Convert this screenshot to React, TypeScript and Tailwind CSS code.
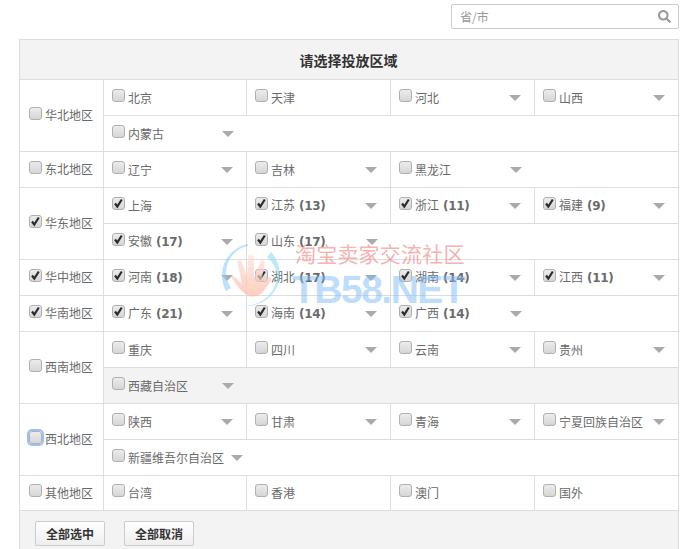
import { FaSearch } from "react-icons/fa";

interface Province {
  readonly name: string;
  readonly count?: number;
  readonly checked?: boolean;
  readonly arrow?: boolean;
}

interface Region {
  readonly name: string;
  readonly checked?: boolean;
  readonly focus?: boolean;
  readonly shaded?: boolean;
  readonly rows: readonly (readonly Province[])[];
}

const regions: Region[] = [
  {
    name: "华北地区",
    rows: [
      [
        { name: "北京" },
        { name: "天津" },
        { name: "河北", arrow: true },
        { name: "山西", arrow: true },
      ],
      [{ name: "内蒙古", arrow: true }],
    ],
  },
  {
    name: "东北地区",
    rows: [
      [
        { name: "辽宁", arrow: true },
        { name: "吉林", arrow: true },
        { name: "黑龙江", arrow: true },
      ],
    ],
  },
  {
    name: "华东地区",
    checked: true,
    rows: [
      [
        { name: "上海", checked: true },
        { name: "江苏", count: 13, checked: true, arrow: true },
        { name: "浙江", count: 11, checked: true, arrow: true },
        { name: "福建", count: 9, checked: true, arrow: true },
      ],
      [
        { name: "安徽", count: 17, checked: true, arrow: true },
        { name: "山东", count: 17, checked: true, arrow: true },
      ],
    ],
  },
  {
    name: "华中地区",
    checked: true,
    rows: [
      [
        { name: "河南", count: 18, checked: true, arrow: true },
        { name: "湖北", count: 17, checked: true, arrow: true },
        { name: "湖南", count: 14, checked: true, arrow: true },
        { name: "江西", count: 11, checked: true, arrow: true },
      ],
    ],
  },
  {
    name: "华南地区",
    checked: true,
    rows: [
      [
        { name: "广东", count: 21, checked: true, arrow: true },
        { name: "海南", count: 14, checked: true, arrow: true },
        { name: "广西", count: 14, checked: true, arrow: true },
      ],
    ],
  },
  {
    name: "西南地区",
    shaded: true,
    rows: [
      [
        { name: "重庆" },
        { name: "四川", arrow: true },
        { name: "云南", arrow: true },
        { name: "贵州", arrow: true },
      ],
      [{ name: "西藏自治区", arrow: true }],
    ],
  },
  {
    name: "西北地区",
    focus: true,
    rows: [
      [
        { name: "陕西", arrow: true },
        { name: "甘肃", arrow: true },
        { name: "青海", arrow: true },
        { name: "宁夏回族自治区", arrow: true },
      ],
      [{ name: "新疆维吾尔自治区", arrow: true }],
    ],
  },
  {
    name: "其他地区",
    rows: [
      [
        { name: "台湾" },
        { name: "香港" },
        { name: "澳门" },
        { name: "国外" },
      ],
    ],
  },
];

function Box({ checked, focus }: { checked?: boolean; focus?: boolean }) {
  return (
    <span
      className={`flex w-[13px] h-[13px] shrink-0 -mt-[5px] items-center justify-center rounded-[3px] border border-[#b0b0b0] bg-gradient-to-b from-[#ececec] to-[#d6d6d6] ${
        focus ? "outline-2 outline-[#9cc0f5]" : ""
      }`}
    >
      {checked && (
        <svg width="11" height="11" viewBox="0 0 11 11">
          <path d="M2 5.5 L4.3 8.5 L8.8 1.5" fill="none" stroke="#2c2c2c" strokeWidth="2.2" />
        </svg>
      )}
    </span>
  );
}

function Arrow() {
  return (
    <span className="ml-[7px] w-0 h-0 shrink-0 border-x-[6px] border-x-transparent border-t-[6px] border-t-[#aaaaaa]" />
  );
}

function ProvinceCell({
  province,
  divider,
  short,
}: {
  province: Province;
  divider: boolean;
  short: boolean;
}) {
  return (
    <div
      className={`flex items-center pl-[8px] pr-[13px] ${short ? "h-[34px]" : "h-[35px]"} ${
        divider ? "border-r border-[#dddddd]" : ""
      }`}
    >
      <Box checked={province.checked} />
      <span className="ml-[3px] flex-1 whitespace-nowrap">
        {province.name}
        {province.count !== undefined && (
          <b className="ml-[4px] text-[12px] font-['DejaVu_Sans',sans-serif] tracking-[-0.3px]">
            ({province.count})
          </b>
        )}
      </span>
      {province.arrow && <Arrow />}
    </div>
  );
}

export default function App() {
  return (
    <div className="w-[687px] h-[549px] relative overflow-hidden bg-white text-[12px] leading-[18px] text-[#6a6a6a] font-['Noto_Sans_CJK_SC','Liberation_Sans',sans-serif]">
      <div className="flex justify-end pt-[4px] pr-[8px] h-[39px]">
        <div className="flex items-center justify-between w-[228px] h-[25px] pl-[8px] pr-[7px] rounded-[2px] border border-[#cccccc] text-[#999999]">
          <span>省/市</span>
          <FaSearch size={13} className="text-[#999999]" />
        </div>
      </div>

      <div className="w-[660px] ml-[19px] border-x border-t border-[#dddddd]">
        <div className="flex items-center justify-center pr-[1px] h-[40px] bg-[#f3f3f3] border-b border-[#dddddd] text-[14px] font-bold text-[#333333]">
          请选择投放区域
        </div>
        {regions.map((region, r) => (
          <div key={region.name} className="flex border-b border-[#dddddd]">
            <div className="flex w-[84px] shrink-0 items-center pl-[9px] border-r border-[#dddddd]">
              <Box checked={region.checked} focus={region.focus} />
              <span className="ml-[3px] -mt-[1px] whitespace-nowrap">{region.name}</span>
            </div>
            <div className="flex-1 min-w-0">
              {region.rows.map((row, i) => (
                <div
                  key={i}
                  className={`grid grid-cols-[143px_144px_144px_143px] border-[#dddddd] ${
                    i > 0 ? "border-t" : ""
                  } ${region.shaded && i > 0 ? "bg-[#f3f3f3]" : ""}`}
                >
                  {row.map((province, j) => (
                    <ProvinceCell
                      key={province.name}
                      province={province}
                      divider={j < row.length - 1}
                      short={r === regions.length - 1}
                    />
                  ))}
                </div>
              ))}
            </div>
          </div>
        ))}
        <div className="flex gap-[19px] h-[40px] bg-[#f3f3f3] pl-[15px] pt-[10px]">
          <button className="w-[70px] h-[25px] rounded-[2px] border border-[#cccccc] bg-gradient-to-b from-white to-[#eeeeee] font-bold text-[#333333]">
            全部选中
          </button>
          <button className="w-[70px] h-[25px] rounded-[2px] border border-[#cccccc] bg-gradient-to-b from-white to-[#eeeeee] font-bold text-[#333333]">
            全部取消
          </button>
        </div>
      </div>

      {/* watermark */}
      <div className="absolute left-[217px] top-[241px] w-[260px] h-[70px] pointer-events-none">
        <svg width="72" height="72" viewBox="0 0 72 72" className="absolute left-0 top-0">
          <defs>
            <linearGradient id="palm" x1="0" y1="0" x2="0" y2="1">
              <stop offset="0" stopColor="#fde3d8" />
              <stop offset="1" stopColor="#fbb9a6" />
            </linearGradient>
          </defs>
          <path
            d="M31 3 A32 32 0 0 0 9 50 L14 47 A27 27 0 0 1 31 5 Z"
            fill="#8fcdf5"
            fillOpacity="0.6"
          />
          <path
            d="M54 11 A32 32 0 0 1 20 63 A31 31 0 0 0 60 36 A28 28 0 0 0 50 16 Z"
            fill="#8cdcf0"
            fillOpacity="0.6"
          />
          <path
            d="M14 36 Q17 34 20 38 L25 43 L20 20 Q22 16 25 20 L30 36 L31 15 Q34 12 37 16 L37 36 L44 20 Q47 18 48 22 L44 42 L52 36 Q55 37 54 40 L45 52 Q39 57 32 55 Q24 52 14 36 Z"
            fill="url(#palm)"
            fillOpacity="0.7"
          />
          <path d="M29 48 Q36 43 40 51" fill="none" stroke="#fbe6a8" strokeWidth="1" />
        </svg>
        <span className="absolute left-[78px] top-[0px] whitespace-nowrap text-[21px] leading-[24px] tracking-[0.2px] text-[#f27f7f] opacity-60">
          淘宝卖家交流社区
        </span>
        <span className="absolute left-[75px] top-[28px] whitespace-nowrap text-[39px] leading-[42px] font-bold tracking-[-1.5px] text-[#7fbcf7] opacity-50 font-['Liberation_Sans',sans-serif]">
          TB58.NET
        </span>
      </div>
    </div>
  );
}
